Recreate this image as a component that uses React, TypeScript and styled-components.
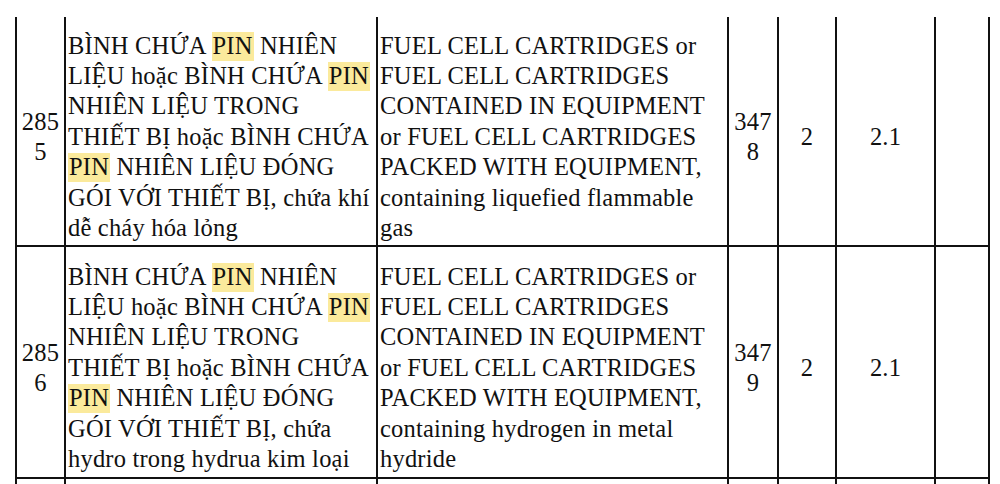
import styled, { createGlobalStyle } from 'styled-components'

const serif = `"Liberation Serif", "Times New Roman", Times, serif`

const GlobalStyle = createGlobalStyle`
  html, body {
    margin: 0;
    padding: 0;
    background: #fff;
    overflow: hidden;
  }
  body {
    font-family: ${serif};
    color: #111;
  }
`

const Page = styled.div`
  width: 1000px;
  height: 484px;
  overflow: hidden;
  padding-top: 17px;
  box-sizing: border-box;
`

const Table = styled.table`
  margin-left: 15px;
  width: 975px;
  table-layout: fixed;
  border-collapse: collapse;
  font-family: ${serif};
  font-size: 24.5px;
  line-height: 30.4px;
  letter-spacing: 0.2px;
  color: #111;
`

const Row = styled.tr<{ $height: number; $first?: boolean }>`
  height: ${(p) => p.$height}px;

  td {
    border-top: ${(p) => (p.$first ? 'none' : '2px solid #111')};
  }
`

const Cell = styled.td<{ $center?: boolean }>`
  border: 2px solid #111;
  padding: 12px 2px 0;
  vertical-align: middle;
  text-align: ${(p) => (p.$center ? 'center' : 'left')};
  white-space: nowrap;
  overflow: hidden;
`

const Line = styled.div`
  display: block;
`

const Mark = styled.span`
  background: #fbea9c;
  padding: 0 1px 2px;
`

type Entry = {
  no: [string, string]
  vi: React.ReactNode[]
  en: string[]
  un: [string, string]
  cls: string
  sub: string
}

const pin = <Mark>PIN</Mark>

const entries: Entry[] = [
  {
    no: ['285', '5'],
    vi: [
      <>BÌNH CHỨA {pin} NHIÊN</>,
      <>LIỆU hoặc BÌNH CHỨA {pin}</>,
      <>NHIÊN LIỆU TRONG</>,
      <>THIẾT BỊ hoặc BÌNH CHỨA</>,
      <>{pin} NHIÊN LIỆU ĐÓNG</>,
      <>GÓI VỚI THIẾT BỊ, chứa khí</>,
      <>dễ cháy hóa lỏng</>,
    ],
    en: [
      'FUEL CELL CARTRIDGES or',
      'FUEL CELL CARTRIDGES',
      'CONTAINED IN EQUIPMENT',
      'or FUEL CELL CARTRIDGES',
      'PACKED WITH EQUIPMENT,',
      'containing liquefied flammable',
      'gas',
    ],
    un: ['347', '8'],
    cls: '2',
    sub: '2.1',
  },
  {
    no: ['285', '6'],
    vi: [
      <>BÌNH CHỨA {pin} NHIÊN</>,
      <>LIỆU hoặc BÌNH CHỨA {pin}</>,
      <>NHIÊN LIỆU TRONG</>,
      <>THIẾT BỊ hoặc BÌNH CHỨA</>,
      <>{pin} NHIÊN LIỆU ĐÓNG</>,
      <>GÓI VỚI THIẾT BỊ, chứa</>,
      <>hydro trong hydrua kim loại</>,
    ],
    en: [
      'FUEL CELL CARTRIDGES or',
      'FUEL CELL CARTRIDGES',
      'CONTAINED IN EQUIPMENT',
      'or FUEL CELL CARTRIDGES',
      'PACKED WITH EQUIPMENT,',
      'containing hydrogen in metal',
      'hydride',
    ],
    un: ['347', '9'],
    cls: '2',
    sub: '2.1',
  },
]

const heights = [229, 232]

export default function App() {
  return (
    <>
      <GlobalStyle />
      <Page>
        <Table>
          <colgroup>
            <col style={{ width: 49 }} />
            <col style={{ width: 312 }} />
            <col style={{ width: 351 }} />
            <col style={{ width: 50 }} />
            <col style={{ width: 58 }} />
            <col style={{ width: 99 }} />
            <col style={{ width: 54 }} />
          </colgroup>
          <tbody>
            {entries.map((e, i) => (
              <Row key={e.no.join('')} $height={heights[i]} $first={i === 0}>
                <Cell $center>
                  <Line>{e.no[0]}</Line>
                  <Line>{e.no[1]}</Line>
                </Cell>
                <Cell>
                  {e.vi.map((l, j) => (
                    <Line key={j}>{l}</Line>
                  ))}
                </Cell>
                <Cell>
                  {e.en.map((l, j) => (
                    <Line key={j}>{l}</Line>
                  ))}
                </Cell>
                <Cell $center>
                  <Line>{e.un[0]}</Line>
                  <Line>{e.un[1]}</Line>
                </Cell>
                <Cell $center>{e.cls}</Cell>
                <Cell $center>{e.sub}</Cell>
                <Cell />
              </Row>
            ))}
            <Row $height={120}>
              <Cell />
              <Cell />
              <Cell />
              <Cell />
              <Cell />
              <Cell />
              <Cell />
            </Row>
          </tbody>
        </Table>
      </Page>
    </>
  )
}
